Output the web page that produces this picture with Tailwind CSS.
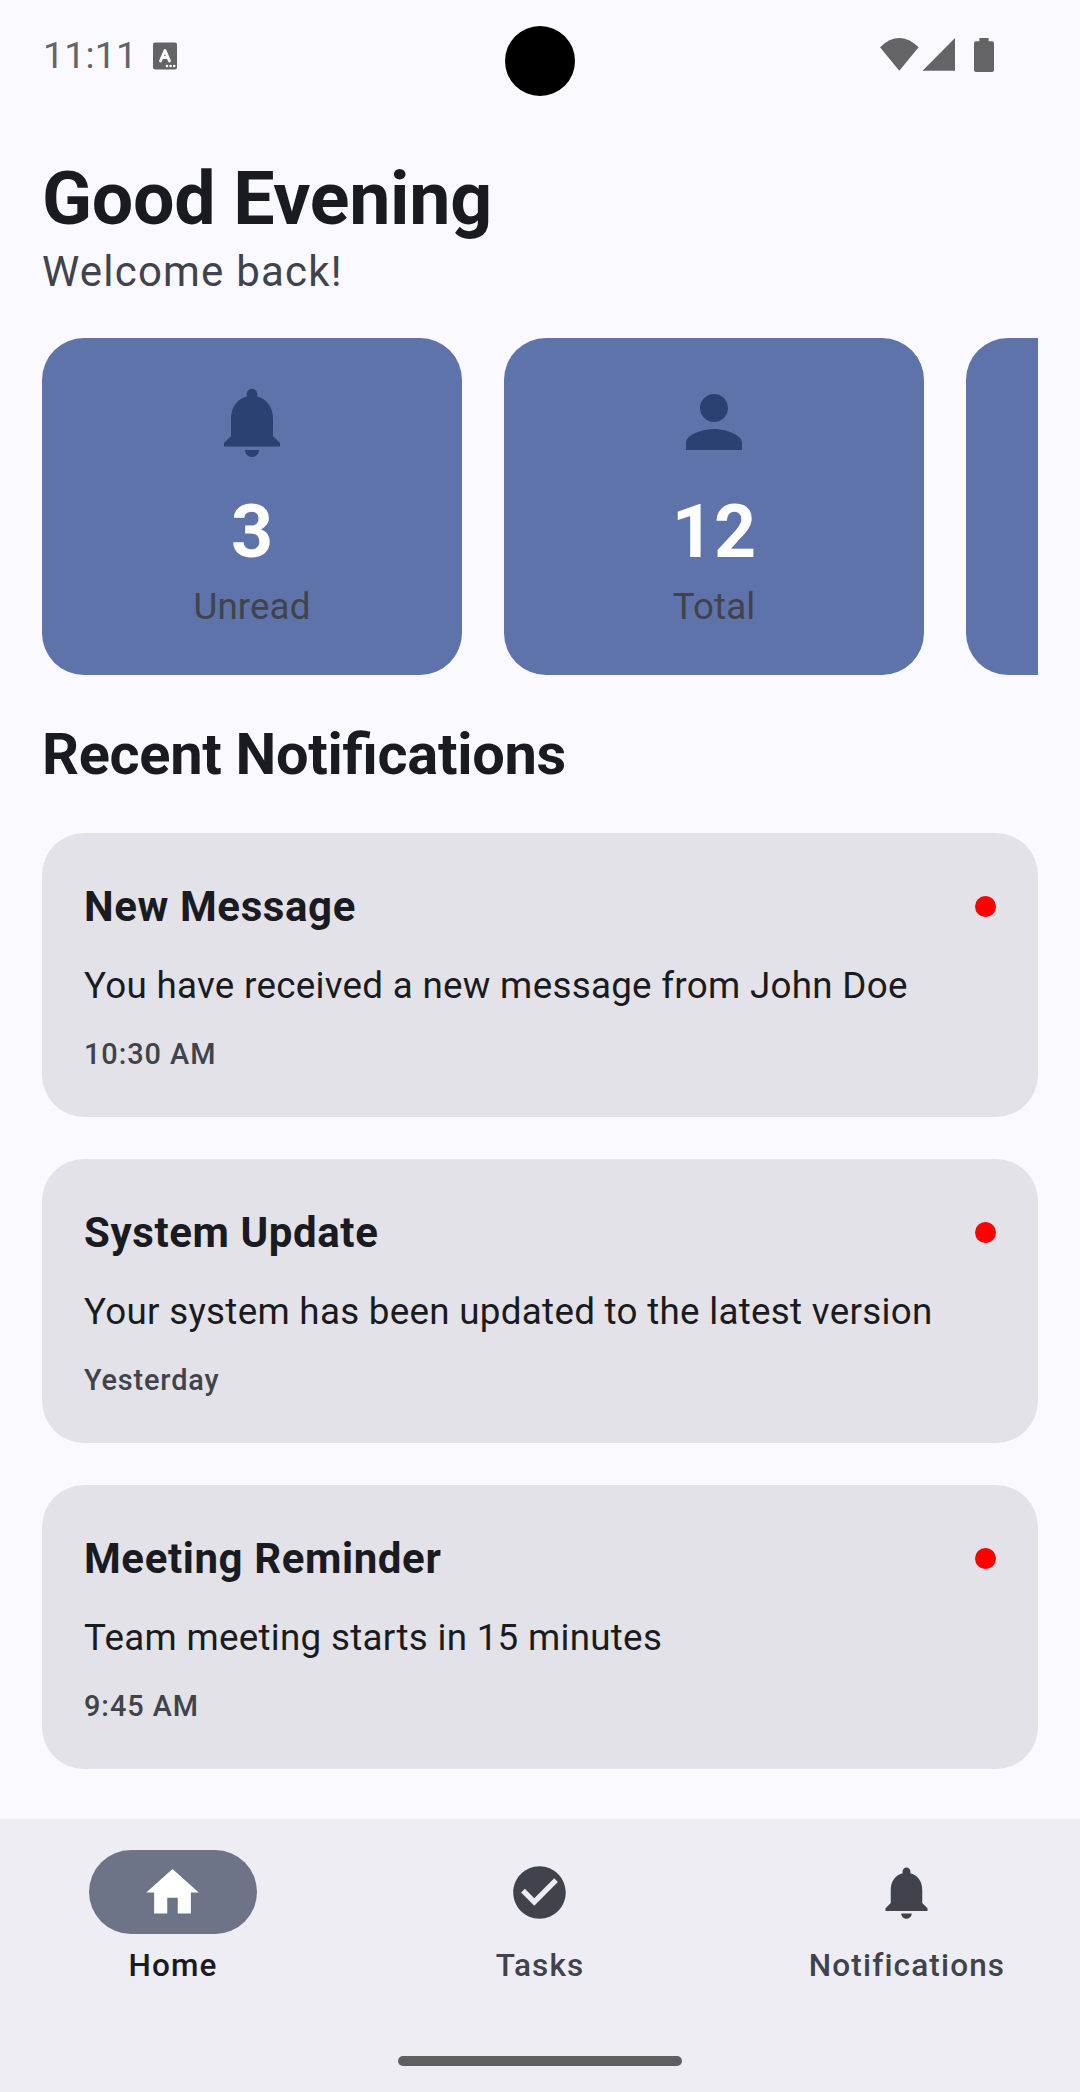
<!DOCTYPE html>
<html lang="en">
<head>
<meta charset="utf-8">
<title>Home</title>
<script src="https://cdn.jsdelivr.net/npm/@tailwindcss/browser@4"></script>
</head>
<body class="w-[1080px] h-[2092px] overflow-hidden bg-[#f9f9ff] font-['Roboto',sans-serif] text-[#1a1b20] flex flex-col">
  <!-- Status bar -->
  <header class="relative h-[110px] shrink-0 flex items-start pl-[43px] pr-[86px] text-[#646466]">
    <span class="mt-[34px] h-[42px] text-[37.5px] leading-[42px] tracking-[0.2px]">11:11</span>
    <svg class="ml-auto mt-[38px] w-[114px] h-[34px]" viewBox="0 0 114 34" fill="currentColor">
      <path d="M0 9.200Q19.300-9 38.600 9.200L19.300 32.700Z"/>
      <path d="M75 0V32.700H42.500Z"/>
      <path d="M99.400 0h9.200v3.300h3.400a2 2 0 0 1 2 2V32a2 2 0 0 1-2 2H96a2 2 0 0 1-2-2V5.300a2 2 0 0 1 2-2h3.400Z"/>
    </svg>
    <svg class="absolute left-[153px] top-[42px] w-[24px] h-[28px]" viewBox="0 0 24 28">
      <rect y="0.500" width="24" height="27" rx="2" fill="currentColor"/>
      <path d="M7.500 19L12 8.500L16.500 19M9 15.500H15" fill="none" stroke="#f9f9ff" stroke-width="2.900" stroke-linecap="round" stroke-linejoin="round"/>
      <g fill="#f9f9ff"><circle cx="14" cy="24" r="1.300"/><circle cx="17.600" cy="24" r="1.300"/><circle cx="21.200" cy="24" r="1.300"/></g>
    </svg>
    <div class="absolute left-[505px] top-[26px] w-[70px] h-[70px] rounded-full bg-black"></div>
  </header>

  <main class="flex-1 px-[42px] pt-[42px]">
    <h1 class="text-[73.5px] leading-[94.5px] tracking-[-0.3px] font-bold">Good Evening</h1>
    <p class="-mt-[6.5px] text-[42px] leading-[63px] tracking-[1.2px] text-[#40434b]">Welcome back!</p>

    <!-- Horizontally scrolling stats -->
    <section class="mt-[35px] flex gap-[42px] overflow-hidden text-[#40434b]">
      <div class="w-[420px] h-[337px] shrink-0 rounded-[42px] bg-[#5e73aa] p-[42px] flex flex-col items-center">
        <svg class="w-[84px] h-[84px] shrink-0" viewBox="0 0 24 24" fill="#2a4172"><path d="M12 22c1.100 0 2-.9 2-2h-4c0 1.100.89 2 2 2zm6-6v-5c0-3.070-1.640-5.640-4.500-6.320V4c0-.83-.67-1.500-1.500-1.500s-1.500.67-1.500 1.500v.68C7.630 5.360 6 7.920 6 11v5l-2 2v1h16v-1l-2-2z"/></svg>
        <span class="mt-[21px] text-[73.5px] leading-[94.5px] font-bold text-white">3</span>
        <span class="mt-px text-[36.75px] leading-[52.5px] tracking-[0.1px]">Unread</span>
      </div>
      <div class="w-[420px] h-[337px] shrink-0 rounded-[42px] bg-[#5e73aa] p-[42px] flex flex-col items-center">
        <svg class="w-[84px] h-[84px] shrink-0" viewBox="0 0 24 24" fill="#2a4172"><path d="M12 12c2.210 0 4-1.790 4-4s-1.790-4-4-4-4 1.790-4 4 1.790 4 4 4zm0 2c-2.670 0-8 1.340-8 4v2h16v-2c0-2.660-5.330-4-8-4z"/></svg>
        <span class="mt-[21px] text-[73.5px] leading-[94.5px] font-bold text-white">12</span>
        <span class="mt-px text-[36.75px] leading-[52.5px] tracking-[0.1px]">Total</span>
      </div>
      <div class="w-[420px] h-[337px] shrink-0 rounded-[42px] bg-[#5e73aa]"></div>
    </section>

    <h2 class="mt-[43px] text-[57.75px] leading-[73.5px] tracking-[-0.3px] [font-feature-settings:'liga'_1] font-bold">Recent Notifications</h2>

    <section class="mt-[41.5px] flex flex-col gap-[42px]">
      <article class="h-[284px] rounded-[42px] bg-[#e2e2e8] p-[42px] flex flex-col">
        <div class="flex items-center justify-between">
          <h3 class="text-[42px] leading-[63px] tracking-[0.6px] font-bold">New Message</h3>
          <span class="size-[21px] rounded-full bg-[#ff0000]"></span>
        </div>
        <p class="mt-[22px] text-[36.75px] leading-[52px] tracking-[0.29px]">You have received a new message from John Doe</p>
        <p class="mt-[21px] text-[28.875px] leading-[42px] tracking-[0.95px] font-medium text-[#40434b]">10:30 AM</p>
      </article>
      <article class="h-[284px] rounded-[42px] bg-[#e2e2e8] p-[42px] flex flex-col">
        <div class="flex items-center justify-between">
          <h3 class="text-[42px] leading-[63px] tracking-[0.6px] font-bold">System Update</h3>
          <span class="size-[21px] rounded-full bg-[#ff0000]"></span>
        </div>
        <p class="mt-[22px] text-[36.75px] leading-[52px] tracking-[0.29px]">Your system has been updated to the latest version</p>
        <p class="mt-[21px] text-[28.875px] leading-[42px] tracking-[0.85px] font-medium text-[#40434b]">Yesterday</p>
      </article>
      <article class="h-[284px] rounded-[42px] bg-[#e2e2e8] p-[42px] flex flex-col">
        <div class="flex items-center justify-between">
          <h3 class="text-[42px] leading-[63px] tracking-[0.6px] font-bold">Meeting Reminder</h3>
          <span class="size-[21px] rounded-full bg-[#ff0000]"></span>
        </div>
        <p class="mt-[22px] text-[36.75px] leading-[52px] tracking-[0.29px]">Team meeting starts in 15 minutes</p>
        <p class="mt-[21px] text-[28.875px] leading-[42px] tracking-[0.95px] font-medium text-[#40434b]">9:45 AM</p>
      </article>
    </section>
  </main>

  <!-- Bottom navigation -->
  <nav class="h-[273px] shrink-0 bg-[#eeedf3] pt-[31px] flex flex-col items-center text-[31.5px] leading-[42px] tracking-[1.15px] font-medium text-[#40434b]">
    <div class="w-full grid grid-cols-3 gap-[21px]">
      <a class="flex flex-col items-center gap-[11px] text-[#1a1b20]">
        <span class="w-[168px] h-[84px] pr-px rounded-full bg-[#6e7488] flex items-center justify-center">
          <svg class="size-[63px]" viewBox="0 0 24 24" fill="#fff"><path d="M10 20v-6h4v6h5v-8h3L12 3 2 12h3v8z"/></svg>
        </span>
        Home
      </a>
      <a class="flex flex-col items-center gap-[11px]">
        <span class="w-[168px] h-[84px] pr-px flex items-center justify-center">
          <svg class="size-[63px]" viewBox="0 0 24 24" fill="#40434b"><path d="M12 2C6.480 2 2 6.480 2 12s4.480 10 10 10 10-4.480 10-10S17.520 2 12 2zm-2 15l-5-5 1.410-1.410L10 14.170l7.590-7.590L19 8l-9 9z"/></svg>
        </span>
        Tasks
      </a>
      <a class="flex flex-col items-center gap-[11px]">
        <span class="w-[168px] h-[84px] pr-px flex items-center justify-center">
          <svg class="size-[63px]" viewBox="0 0 24 24" fill="#40434b"><path d="M12 22c1.100 0 2-.9 2-2h-4c0 1.100.89 2 2 2zm6-6v-5c0-3.070-1.640-5.640-4.500-6.320V4c0-.83-.67-1.500-1.500-1.500s-1.500.67-1.500 1.500v.68C7.630 5.360 6 7.920 6 11v5l-2 2v1h16v-1l-2-2z"/></svg>
        </span>
        Notifications
      </a>
    </div>
    <div class="mt-[69px] w-[284px] h-[10px] rounded-full bg-[#5f5f61]"></div>
  </nav>
</body>
</html>
